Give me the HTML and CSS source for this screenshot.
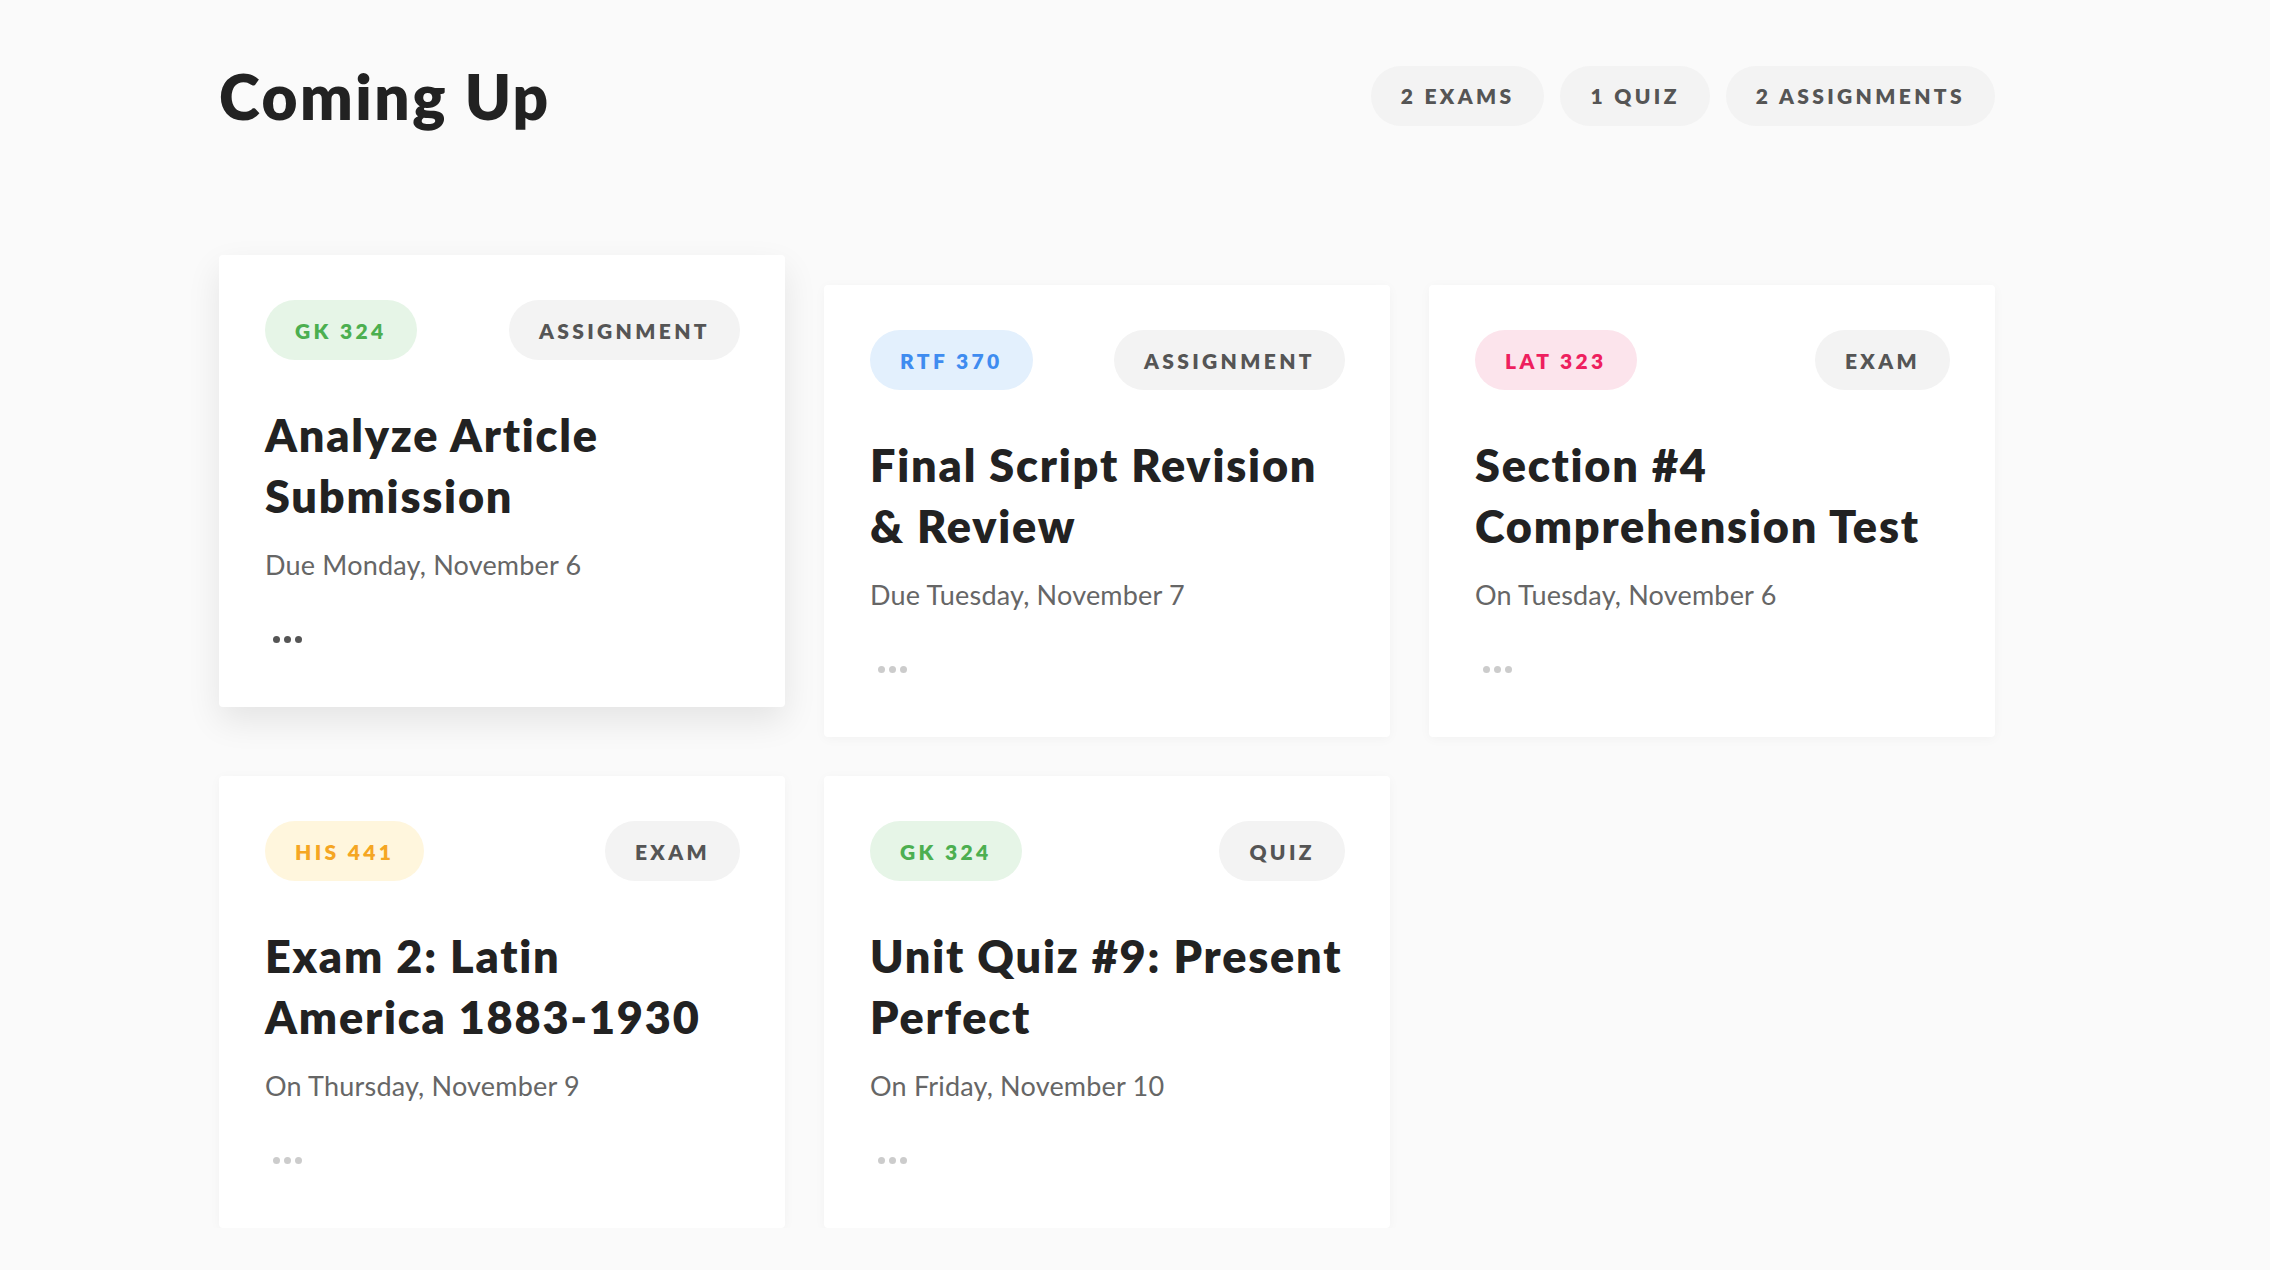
FILE: index.html
```html
<!DOCTYPE html>
<html lang="en">
<head>
<meta charset="utf-8">
<title>Coming Up</title>
<link rel="stylesheet" href="styles.css">
</head>
<body>
<main class="page">
  <header class="header">
    <h1 class="title">Coming Up</h1>
    <div class="counts">
      <span class="pill">2 Exams</span>
      <span class="pill">1 Quiz</span>
      <span class="pill">2 Assignments</span>
    </div>
  </header>

  <section class="grid">
    <article class="card card--raised">
      <div class="card-top">
        <span class="pill pill--green">GK 324</span>
        <span class="pill">Assignment</span>
      </div>
      <h2 class="card-title">Analyze Article<br>Submission</h2>
      <p class="card-date">Due Monday, November 6</p>
      <div class="dots dots--dark"><i></i><i></i><i></i></div>
    </article>

    <article class="card">
      <div class="card-top">
        <span class="pill pill--blue">RTF 370</span>
        <span class="pill">Assignment</span>
      </div>
      <h2 class="card-title">Final Script Revision<br>&amp; Review</h2>
      <p class="card-date">Due Tuesday, November 7</p>
      <div class="dots"><i></i><i></i><i></i></div>
    </article>

    <article class="card">
      <div class="card-top">
        <span class="pill pill--pink">LAT 323</span>
        <span class="pill">Exam</span>
      </div>
      <h2 class="card-title">Section #4<br>Comprehension Test</h2>
      <p class="card-date">On Tuesday, November 6</p>
      <div class="dots"><i></i><i></i><i></i></div>
    </article>

    <article class="card">
      <div class="card-top">
        <span class="pill pill--yellow">HIS 441</span>
        <span class="pill">Exam</span>
      </div>
      <h2 class="card-title">Exam 2: Latin<br>America 1883-1930</h2>
      <p class="card-date">On Thursday, November 9</p>
      <div class="dots"><i></i><i></i><i></i></div>
    </article>

    <article class="card">
      <div class="card-top">
        <span class="pill pill--green">GK 324</span>
        <span class="pill">Quiz</span>
      </div>
      <h2 class="card-title">Unit Quiz #9: Present<br>Perfect</h2>
      <p class="card-date">On Friday, November 10</p>
      <div class="dots"><i></i><i></i><i></i></div>
    </article>
  </section>
</main>
</body>
</html>
```

FILE: styles.css
```css
* { box-sizing: border-box; }

html, body {
  margin: 0;
  padding: 0;
  background: #fafafa;
  font-family: "Lato", "Open Sans", "Liberation Sans", sans-serif;
  color: #222;
}

.page {
  width: 1776px;
  margin-left: 219px;
  padding-top: 65px;
}

.header {
  display: flex;
  align-items: center;
  justify-content: space-between;
  height: 61px;
}

.title {
  margin: 0;
  font-size: 62px;
  font-weight: 800;
  color: #222;
  letter-spacing: 2.5px;
}

.counts {
  display: flex;
  gap: 16px;
}

.pill {
  display: inline-flex;
  align-items: center;
  justify-content: center;
  height: 60px;
  padding: 0 30px;
  border-radius: 30px;
  background: #f3f3f3;
  color: #555;
  font-size: 21px;
  font-weight: 800;
  letter-spacing: 0.16em;
  text-transform: uppercase;
  white-space: nowrap;
}

.pill--green { background: #e6f5e7; color: #4caf50; }
.pill--blue { background: #e3f0fd; color: #3f8cf0; }
.pill--pink { background: #fce4ec; color: #ee1f5f; }
.pill--yellow { background: #fff6dd; color: #f5a623; }

.grid {
  display: grid;
  grid-template-columns: repeat(3, 566px);
  grid-auto-rows: 452px;
  column-gap: 39px;
  row-gap: 39px;
  margin-top: 159px;
}

.card {
  background: #fff;
  border-radius: 4px;
  padding: 45px 45px 0 46px;
  box-shadow: 0 2px 12px rgba(0, 0, 0, 0.035);
}

.card--raised {
  transform: translateY(-30px);
  box-shadow: 0 14px 34px rgba(0, 0, 0, 0.09);
}

.card-top {
  display: flex;
  justify-content: space-between;
  align-items: center;
}

.card-title {
  margin: 45px 0 0;
  font-size: 45px;
  line-height: 61px;
  font-weight: 800;
  color: #222;
  letter-spacing: 1.8px;
  white-space: nowrap;
}

.card-date {
  margin: 22px 0 0;
  font-size: 27px;
  line-height: 32px;
  color: #666;
  letter-spacing: 0.2px;
}

.dots {
  display: flex;
  gap: 4px;
  margin: 55px 0 0 8px;
}

.dots i {
  width: 7px;
  height: 7px;
  border-radius: 50%;
  background: #ccc;
}

.dots--dark i { background: #555; }
```
